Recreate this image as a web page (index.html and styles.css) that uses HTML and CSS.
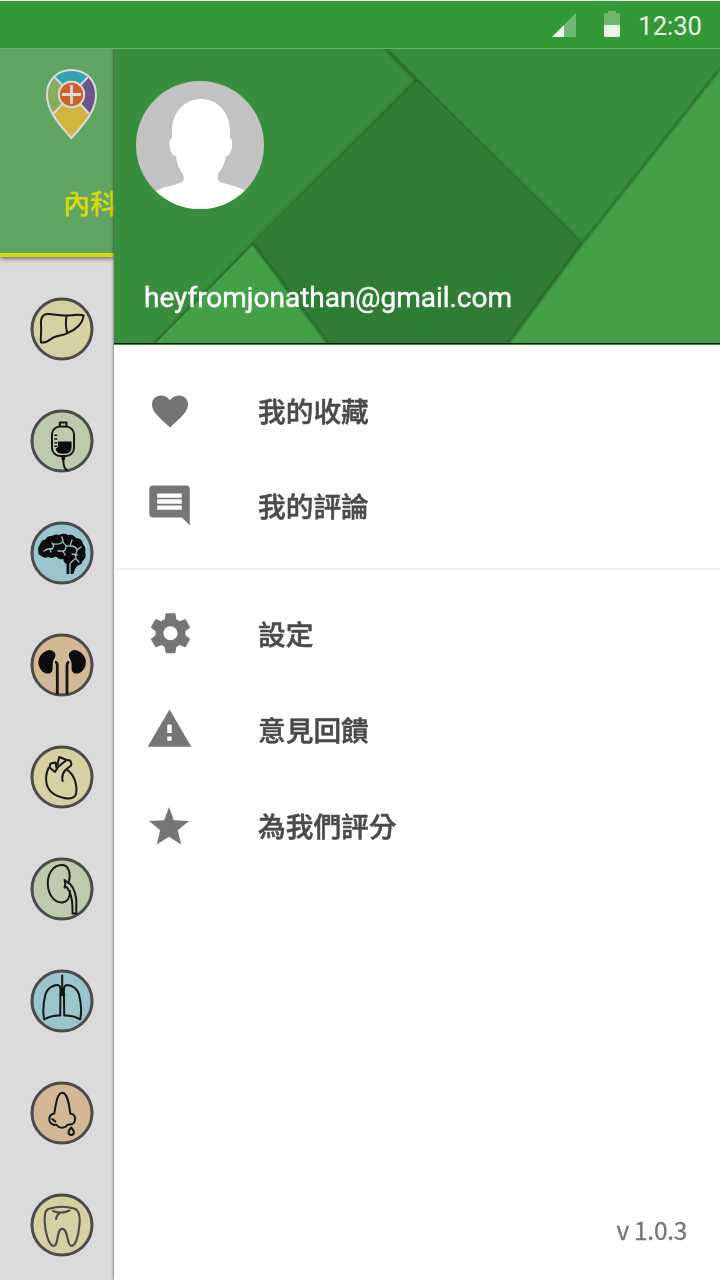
FILE: index.html
```html
<!DOCTYPE html>
<html lang="zh-Hant">
<head>
<meta charset="utf-8">
<title>我的收藏</title>
<link rel="stylesheet" href="styles.css">
</head>
<body>
<div class="screen">
  <header class="status">
    <svg class="signal" width="24" height="24" viewBox="0 0 24 24"><path d="M24 0V24H0Z" fill="#fff" opacity=".3"/><path d="M12 12V24H0Z" fill="#ebf5eb"/></svg>
    <svg class="battery" width="16" height="26" viewBox="0 0 16 26"><path d="M4 0h8v2h3l1 1v11H0V3l1-1h3z" fill="#fff" opacity=".3"/><path d="M0 14h16v11l-1 1H1l-1-1z" fill="#ebf5eb"/></svg>
    <span class="clock">12:30</span>
  </header>
  <div class="body">
    <aside class="rail">
      <div class="rail-head">
        <svg class="pin" width="51" height="71" viewBox="0 0 51 71">
          <defs><clipPath id="pin-shape"><path d="M25.3 1C11 1 1 11.500 1 26C1 43 15 57 25.300 69C36 57 50 43 50 26C50 11.500 40 1 25.300 1Z"/></clipPath></defs>
          <g clip-path="url(#pin-shape)">
            <rect width="51" height="71" fill="#cfb53e"/>
            <path d="M25 26L2 1H49Z" fill="#36a2b3"/><path d="M25 26L2 1H0V52Z" fill="#87ad61"/><path d="M25 26L49 1H51V52Z" fill="#6c548f"/>
          </g>
          <g fill="none" stroke="#d9dcd8" stroke-width="2">
            <path d="M9 8.500L25.300 25.500L41.600 8.500M7.500 44.500L25.300 25.500L43 44.500"/>
            <path d="M25.300 1C11 1 1 11.500 1 26C1 43 15 57 25.300 69C36 57 50 43 50 26C50 11.500 40 1 25.300 1Z"/>
            <circle cx="25.500" cy="25.500" r="12.700" fill="#cd6326"/>
            <path d="M25.500 16V35M16 25.500H35" stroke-width="2.800"/>
          </g>
        </svg>
        <span class="tab">內科</span>
      </div>
      <div class="organs">
        <svg class="organ sand" viewBox="0 0 64 64"><circle cx="32" cy="32" r="30"/><path d="M11 45.500C10 40 12 35 11 28C10.500 21 12.500 17 18 17C24.500 17 29 19 37 18.500C43 18.300 49 17 53.500 18.500C53 26 46 33 37 36.300C32 39 29 38 24.500 40C21 41 18 46.500 11 45.500ZM36.500 18.700Q35 28 37.200 36.300"/></svg>
        <svg class="organ sage" viewBox="0 0 64 64"><circle cx="32" cy="32" r="30"/><rect x="22" y="17.500" width="22" height="29.500" rx="8"/><path d="M29.800 17V13.500H36.500V17M33.200 50C33.300 56 34 60 37 61"/><path class="solid" d="M28 32.500H41.600V38Q41.500 44.500 35 44.700H31Q27 44.500 25.600 40L28 38ZM31 47H35.500L34.500 51.500H32Z"/><path class="dash" d="M25.800 25.500V39"/></svg>
        <svg class="organ aqua" viewBox="0 0 64 64"><circle cx="32" cy="32" r="30"/><path class="solid" d="M8.300 29C8 25 10 24 10.500 22.500Q11 19 15.500 18.500Q17 14.500 22 15Q25 12.500 29 14Q34 11.500 38 14Q43 13 46 17Q52 17 53 23Q56.500 27 55 31Q57 37 52.500 40Q52 43.500 48 44.500Q44.500 47 43.500 53H36.500V43Q33 41 33.500 38Q29 39 26 35.500Q22 38 18 36Q14 38 11.500 35Q7.500 34 8.300 29Z"/><path class="fold" d="M14 30Q18 27 22 28Q25 25 22 22M20 28L21 31M24 23Q31 24 33 20L32 16M33 21Q36 26 40 25L42 19M40 25Q47 25 47 30Q44 36 47 39L49 41M47 29L51 26M36 25Q36 31 31 30L28 30M33 30L35 34M47 34L42 33M40 53V43Q42 40 45 38"/></svg>
        <svg class="organ tan" viewBox="0 0 64 64"><circle cx="32" cy="32" r="30"/><path class="solid" d="M25 20Q22 15.500 16 18C10 21 7 27 9 33C10.500 38.500 16 42 20.500 40C24 38 22 33 23 29C23.500 26 26.500 24 25 20ZM39.300 20Q42.300 15.500 48.300 18C54.300 21 57.300 27 55.300 33C53.800 38.500 48.300 42 43.800 40C40.300 38 42.300 33 41.300 29C40.800 26 37.800 24 39.300 20Z"/><path class="thick" d="M25 29.500Q27.300 29 27.300 33V61.500M39.300 29.500Q37 29 37 33V61.500"/></svg>
        <svg class="organ sand" viewBox="0 0 64 64"><circle cx="32" cy="32" r="30"/><path d="M18.500 23C15.500 29 15 38 18.500 43.500C21.500 49 27 51.500 34 53C39 54 43 53.500 45 51C48 46 46 34 41 28.500Q38.500 25.500 36.700 24.700M32.700 36Q31 30 35.500 25L41 20.500Q42 17 39.500 15.200L36.500 15L28 22L25 27L19.500 22.500L20.500 18.500L25.500 17.500L26.500 23M27.500 19.500L29.200 12L35.500 14.500"/></svg>
        <svg class="organ sage" viewBox="0 0 64 64"><circle cx="32" cy="32" r="30"/><path d="M39 24C41 15 38 8 32 8C23 8 17.500 17 17.800 27C18 37 24 45.500 31.500 45.500C37.500 45.500 40 40 40 34M34.500 23L37 25Q44.500 28 46.300 43V56.500H42.500Q43 37 36.500 30L34.500 30.500Q36 27 34.500 23"/></svg>
        <svg class="organ aqua" viewBox="0 0 64 64"><circle cx="32" cy="32" r="30"/><path d="M14.300 50.500C12.500 43 13.500 33 15.500 25Q19 16.500 27.500 16Q30.500 16 30.500 22L30.200 46.500Q21 46 14.300 50.500ZM50.100 50.500C51.900 43 50.900 33 48.900 25Q45.400 16.500 36.900 16Q33.900 16 33.900 22L34.200 46.500Q43.400 46 50.100 50.500ZM32.200 6.500V25M30 26H34.500"/></svg>
        <svg class="organ tan" viewBox="0 0 64 64"><circle cx="32" cy="32" r="30"/><path d="M24.300 32.500C26 23 27 12 32.300 11.800C37.500 12 39 23 40.300 32.500C47 33 46.500 43.500 40 43.500Q37 43 36 45.500Q32 48 28 45.500Q27 43 24 44C17.500 42 18 33.500 24.300 32.500ZM22.300 38L25.300 40.500"/><path d="M41.200 46.500Q37.800 50.500 38.600 52.500Q41.200 55.500 43.800 52.500Q44.500 50 41.200 46.500Z"/></svg>
        <svg class="organ sand tooth" viewBox="0 0 64 64"><circle cx="32" cy="32" r="30"/><path d="M20 15.500Q32 12 44 15.500C50.500 17.500 50 28 49.200 34C48.500 41 46 53 41.500 53C36.500 53 38.500 36 32.300 35.700C26 36 29 53 23.500 53C18 52 15 37 14.700 29C14.500 21 15 16.500 20 15.500ZM23 18Q31 21.500 39.500 17.500M31 19.500Q27 21 26 26"/></svg>
      </div>
    </aside>
    <main class="drawer">
      <section class="profile">
        <svg class="facets" width="606" height="296" viewBox="0 0 606 296" aria-hidden="true">
          <defs><filter id="soft" x="-20%" y="-20%" width="140%" height="140%"><feGaussianBlur stdDeviation="1"/></filter></defs>
          <rect width="606" height="296" fill="#388e3c"/>
          <g fill="none" stroke="#123f16" stroke-width="2" filter="url(#soft)"><path d="M272 0L303 31L468 195" opacity=".65"/><path d="M303 31L139 195L41 294" opacity=".6"/></g>
          <path d="M303 32L468 195L394 294H214L139 195Z" fill="#2f7d32"/>
          <path d="M139 196L214 295H41Z" fill="#43a047"/>
          <path d="M606 21V295H394L468 195Z" fill="#43a047"/>
          <path d="M139 195L214 295M606 20L468 195L394 295" fill="none" stroke="#163d19" stroke-width="1.500" opacity=".65" filter="url(#soft)"/>
          <rect y="294" width="606" height="1" fill="#061006"/><rect y="295" width="606" height="1" fill="#388e3c"/>
        </svg>
        <svg class="avatar" width="128" height="128" viewBox="0 0 128 128">
          <defs><clipPath id="disc"><circle cx="64" cy="64" r="64"/></clipPath></defs>
          <g clip-path="url(#disc)"><rect width="128" height="128" fill="#c2c2c2"/><path fill="#fff" d="M65 18C48 18 36 32 36 50V57C32 58 33 70 37 74Q38 75 40 75Q41 86 47 93Q49 99 46 101C37 105 26 105 18 112V128H112V112C104 105 92 104 84 101Q81 99 82 93Q88 86 90 75Q93 75 94 72C97 67 97 58 94 57V50C94 32 82 18 65 18Z"/></g>
        </svg>
        <div class="email">heyfromjonathan@gmail.com</div>
      </section>
      <nav class="menu">
        <div class="group">
          <a class="item"><svg class="glyph" width="44" height="44" viewBox="0 0 44 44"><path d="M22 38.500L19.400 36.100C10 27.600 4 22.100 4 15.500C4 10.100 8 6.500 13 6.500C16.500 6.500 20 8.300 22 11.200C24 8.300 27.500 6.500 31 6.500C36 6.500 40 10.100 40 15.500C40 22.100 34 27.600 24.600 36.100Z"/></svg><span>我的收藏</span></a>
          <a class="item"><svg class="glyph" width="44" height="44" viewBox="0 0 44 44"><path fill-rule="evenodd" d="M5 1.500H38Q41.800 1.500 41.800 5.500V41.200L33.800 33.500H5Q1.300 33.500 1.300 29.500V5.500Q1.300 1.500 5 1.500ZM9.200 9.500V13.700H33.800V9.500ZM9.200 15.300V19.700H33.800V15.300ZM9.200 21.500V25.700H33.800V21.500Z"/></svg><span>我的評論</span></a>
        </div>
        <div class="group second">
          <a class="item"><svg class="glyph" width="44" height="44" viewBox="0.750 0.900 22 22"><path d="M19.430 12.980c.04-.32.070-.64.070-.98s-.03-.66-.07-.98l2.110-1.650c.19-.15.240-.42.120-.64l-2-3.460c-.12-.22-.39-.3-.61-.22l-2.490 1c-.52-.4-1.080-.73-1.690-.98l-.38-2.650C14.460 2.180 14.250 2 14 2h-4c-.25 0-.46.180-.49.420l-.38 2.650c-.61.250-1.170.590-1.690.98l-2.490-1c-.23-.09-.49 0-.61.220l-2 3.460c-.13.220-.07.490.120.640l2.110 1.650c-.04.320-.07.650-.07.980s.03.660.070.980l-2.110 1.650c-.19.150-.24.420-.12.640l2 3.460c.12.220.39.300.61.220l2.490-1c.52.400 1.080.730 1.690.980l.38 2.650c.03.240.24.420.49.420h4c.25 0 .46-.18.490-.42l.38-2.650c.61-.25 1.170-.59 1.690-.98l2.490 1c.23.090.49 0 .61-.22l2-3.460c.12-.22.070-.49-.12-.64l-2.110-1.650zM12 15.500c-1.930 0-3.500-1.570-3.500-3.500s1.570-3.500 3.500-3.500 3.500 1.570 3.500 3.500-1.570 3.500-3.500 3.500z"/></svg><span>設定</span></a>
          <a class="item"><svg class="glyph" width="44" height="44" viewBox="0 0 44 44"><path fill-rule="evenodd" d="M21.500 2.500L43.300 39.800H-.3ZM19.300 17.500V26H23.700V17.500ZM19.300 29.500V33.700H23.700V29.500Z"/></svg><span>意見回饋</span></a>
          <a class="item"><svg class="glyph" width="44" height="44" viewBox="0 0 44 44"><path d="M21 4L25.800 17.300L41 18L29.700 27.200L33.200 41.500L21 33.800L8.700 41.500L12.200 27.200L1 18L16.200 17.300Z"/></svg><span>為我們評分</span></a>
        </div>
      </nav>
      <footer class="version">v 1.0.3</footer>
    </main>
  </div>
</div>
</body>
</html>
```
FILE: styles.css
```css
* { box-sizing: border-box; }
body { margin: 0; background: #fff; font-family: "Noto Sans CJK TC", sans-serif; }
.screen { width: 720px; height: 1280px; overflow: hidden; display: flex; flex-direction: column; }
.status { height: 49px; flex: none; display: flex; align-items: flex-start; justify-content: flex-end; padding: 11px 18px 0 0; background: #339836; border-top: 1px solid #fff; border-bottom: 1px solid #66b168; }
.signal { margin: 1px 28px 0 0; }
.battery { margin: -1px 18px 0 0; }
.clock { font: 25.6px/30px Roboto, sans-serif; color: #ebf5eb; margin-top: -1px; }
.body { flex: 1; min-height: 0; display: flex; overflow: hidden; }
.rail { width: 114px; flex: none; overflow: hidden; background: #dbdbdb; }
.rail-head { height: 208px; padding: 20px 0 0 46px; background: #60a563; border-bottom: 4px solid #dad60f; box-shadow: 0 1px 5px rgba(0,0,0,.65); display: flex; flex-direction: column; }
.pin { display: block; flex: none; }
.tab { margin: 43px 0 0 17px; font-size: 27px; line-height: 40px; font-weight: 500; color: #dad60f; -webkit-text-stroke: .2px; white-space: nowrap; }
.organs { display: flex; flex-direction: column; gap: 48px; padding: 40px 0 0 30px; }
.organ { width: 64px; height: 64px; flex: none; fill: none; stroke: #151714; stroke-width: 2; stroke-linejoin: round; stroke-linecap: round; }
.organ circle { stroke: #4b4b4b; stroke-width: 3; }
.sand circle { fill: #d6d0a3; }
.sage circle { fill: #bccbae; }
.aqua circle { fill: #9bc5cc; }
.tan circle { fill: #d2b894; }
.organ .solid { fill: #0c0c0c; stroke: none; }
.organ .dash { stroke-width: 3; stroke-dasharray: 1.5 2.2; stroke-linecap: butt; }
.organ .fold { stroke: #9bc5cc; stroke-width: 1.3; }
.organ .thick { stroke-width: 2.8; stroke-linecap: butt; }
.tooth { stroke: #4b4b4b; stroke-width: 2.1; }
.drawer { flex: 1; min-width: 0; display: flex; flex-direction: column; background: #fff; z-index: 1; box-shadow: 0 0 3px rgba(0,0,0,.7); }
.profile { height: 296px; flex: none; position: relative; padding: 32px 0 0 22px; }
.facets { position: absolute; left: 0; top: 0; z-index: -1; }
.avatar { display: block; }
.email { margin: 71px 0 0 8px; color: #fff; font: 28px/36px Roboto, sans-serif; letter-spacing: -.02px; -webkit-text-stroke: .4px; }
.menu { color: #4a4a4a; font-weight: 500; font-size: 27.7px; line-height: 40px; -webkit-text-stroke: .5px; }
.group { height: 225px; padding: 44px 0 0 34px; display: flex; flex-direction: column; gap: 51px; border-bottom: 2px solid #f3f3f3; }
.group span { margin-top: -2px; }
.second { height: auto; padding-top: 41px; gap: 52px; border: 0; }
.second span { margin-top: -1px; }
.item { display: flex; align-items: center; height: 44px; }
.glyph { margin-right: 66px; fill: #757575; flex: none; }
.version { margin: auto 33px 31px 0; text-align: right; color: #757575; font-size: 24.5px; line-height: 38px; letter-spacing: -.3px; -webkit-text-stroke: .3px; }
```
